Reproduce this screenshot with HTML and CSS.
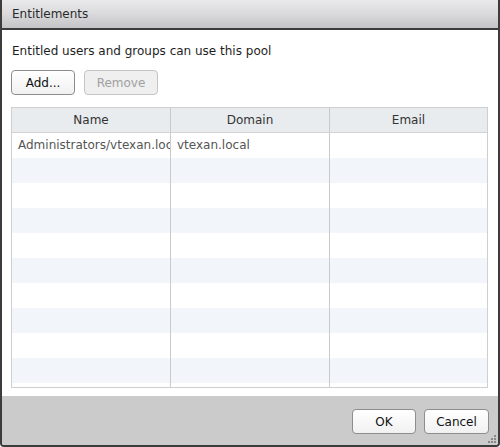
FILE: index.html
```html
<!DOCTYPE html>
<html>
<head>
<meta charset="utf-8">
<link rel="stylesheet" href="styles.css">
</head>
<body>
<div class="dialog">
  <div class="titlebar">Entitlements</div>
  <div class="content">
    <p class="intro">Entitled users and groups can use this pool</p>
    <div class="toolbar">
      <button class="btn btn-add">Add...</button>
      <button class="btn btn-remove" disabled>Remove</button>
    </div>
    <div class="grid">
      <div class="row head">
        <div class="cell">Name</div>
        <div class="cell">Domain</div>
        <div class="cell">Email</div>
      </div>
      <div class="row">
        <div class="cell">Administrators/vtexan.local</div>
        <div class="cell">vtexan.local</div>
        <div class="cell"></div>
      </div>
      <div class="row alt"><div class="cell"></div><div class="cell"></div><div class="cell"></div></div>
      <div class="row"><div class="cell"></div><div class="cell"></div><div class="cell"></div></div>
      <div class="row alt"><div class="cell"></div><div class="cell"></div><div class="cell"></div></div>
      <div class="row"><div class="cell"></div><div class="cell"></div><div class="cell"></div></div>
      <div class="row alt"><div class="cell"></div><div class="cell"></div><div class="cell"></div></div>
      <div class="row"><div class="cell"></div><div class="cell"></div><div class="cell"></div></div>
      <div class="row alt"><div class="cell"></div><div class="cell"></div><div class="cell"></div></div>
      <div class="row"><div class="cell"></div><div class="cell"></div><div class="cell"></div></div>
      <div class="row alt"><div class="cell"></div><div class="cell"></div><div class="cell"></div></div>
      <div class="row partial"><div class="cell"></div><div class="cell"></div><div class="cell"></div></div>
    </div>
  </div>
  <div class="footer">
    <button class="btn btn-ok">OK</button>
    <button class="btn btn-cancel">Cancel</button>
    <svg class="grip" width="10" height="10" viewBox="0 0 10 10">
      <rect x="7" y="1" width="2" height="2" fill="#888"/>
      <rect x="4" y="4" width="2" height="2" fill="#888"/>
      <rect x="7" y="4" width="2" height="2" fill="#888"/>
      <rect x="1" y="7" width="2" height="2" fill="#888"/>
      <rect x="4" y="7" width="2" height="2" fill="#888"/>
      <rect x="7" y="7" width="2" height="2" fill="#888"/>
    </svg>
  </div>
</div>
</body>
</html>
```
FILE: styles.css
```css
html, body {
  margin: 0;
  padding: 0;
  background: #ffffff;
}
body {
  font-family: "DejaVu Sans", Verdana, sans-serif;
  font-size: 12px;
  color: #222;
}
.dialog {
  width: 496px;
  height: 445px;
  border-left: 2px solid #3c3c3c;
  border-right: 2px solid #3c3c3c;
  border-bottom: 2px solid #3c3c3c;
  border-radius: 0 0 4px 4px;
  display: flex;
  flex-direction: column;
  overflow: hidden;
  position: relative;
}
.titlebar {
  box-sizing: border-box;
  padding: 7px 0 0 10px;
  font-size: 12px;
  color: #2a2a2a;
  background: linear-gradient(#e9e9eb, #dcdcde 45%, #c4c4c6);
  border-bottom: 2px solid #3c3c3c;
  flex: none;
  height: 30px;
}
.content {
  background: #fff;
  padding: 0 8px 0 9px;
  flex: 1;
  display: flex;
  flex-direction: column;
}
.intro {
  margin: 14px 0 0 1px;
  font-size: 12px;
  line-height: 14px;
  color: #1e1e1e;
}
.toolbar {
  display: flex;
  gap: 9px;
  margin-top: 12px;
}
.btn {
  font-family: "DejaVu Sans", Verdana, sans-serif;
  font-size: 12px;
  height: 25px;
  box-sizing: border-box;
  border: 1px solid #8d8d8d;
  border-radius: 4px;
  background: linear-gradient(#ffffff, #f1f1f1);
  color: #111;
  padding: 0;
}
.btn-add { width: 64px; }
.btn-remove {
  width: 74px;
  color: #a0a0a0;
  border-color: #c4c4c4;
  background: #efefef;
}
.grid {
  margin-top: 12px;
  border: 1px solid #cfcfcf;
  height: 281px;
  box-sizing: border-box;
  overflow: hidden;
  width: 477px;
}
.row {
  display: grid;
  grid-template-columns: 158px 159px 1fr;
  height: 25px;
  background: #fff;
}
.row.alt { background: #f2f5f9; }
.row.head {
  background: #e8ecef;
  border-bottom: 1px solid #d2d2d2;
  height: 25px;
  box-sizing: border-box;
}
.cell {
  border-left: 1px solid #cacaca;
  line-height: 24px;
  padding-left: 6px;
  color: #555;
  white-space: nowrap;
  overflow: hidden;
}
.cell:first-child { border-left: none; }
.head .cell {
  text-align: center;
  padding-left: 0;
  color: #333;
  line-height: 24px;
}
.footer {
  background: #cbcbcb;
  height: 49px;
  flex: none;
  display: flex;
  justify-content: flex-end;
  align-items: flex-start;
  gap: 8px;
  padding: 13px 9px 0 0;
  box-sizing: border-box;
  position: relative;
}
.btn-ok { width: 64px; }
.btn-cancel { width: 65px; }
.grip {
  position: absolute;
  right: 1px;
  bottom: 1px;
}
```
